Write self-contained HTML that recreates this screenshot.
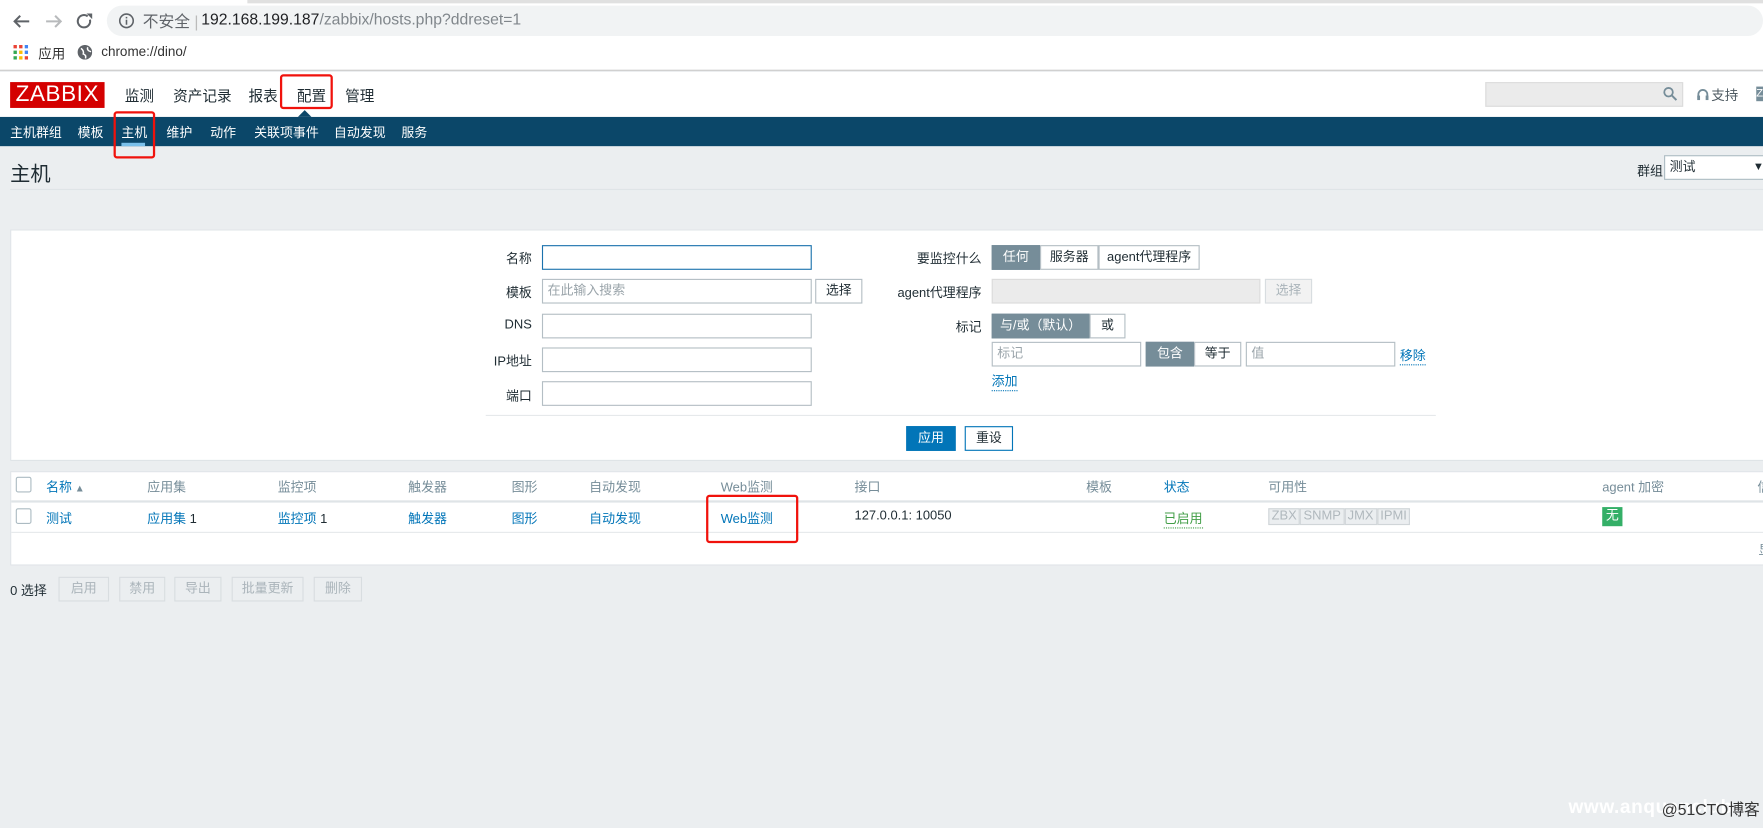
<!DOCTYPE html>
<html><head><meta charset="utf-8">
<style>
*{box-sizing:border-box;margin:0;padding:0}
html,body{width:1763px;height:827px;overflow:hidden;background:#ebeef0}
body{font-family:"Liberation Sans","Noto Sans CJK SC",sans-serif;font-size:11.5px;color:#1f2c33}
#w{position:absolute;left:0;top:0;width:1568px;height:736px;transform:scale(1.12436);transform-origin:0 0;background:#ebeef0}
.a{position:absolute;white-space:nowrap}
.lnk{color:#0275b8}
.inp{position:absolute;background:#fff;border:1px solid #b4bec4;height:22px}
.btn{position:absolute;height:22px;border:1px solid #b4bec4;background:#fff;text-align:center;line-height:20px;font-size:11.5px}
.sel{background:#768d99;color:#fff;border-color:#768d99}
.red{position:absolute;border:2px solid #f0120c;border-radius:3px}
.dis{position:absolute;height:22px;border:1px solid #d8dde0;background:#ebeef0;color:#aab4ba;text-align:center;line-height:20px}
.bd{display:inline-block;border:1px solid #d0d5d8;background:#ebeef0;color:#b0b8bd;padding:0 2px;height:15px;line-height:13px;font-size:11.5px}
</style></head><body>
<div id="w">
<div class="a" style="left:0;top:0;width:1568px;height:63px;background:#fff;border-bottom:1px solid #c8c8c8"></div>
<div class="a" style="left:220px;top:0;width:1348px;height:3px;background:#e0e0e0"></div>
<div class="a" style="left:95px;top:5px;width:1473px;height:27px;background:#f1f3f4;border-radius:14px"></div>
<svg class="a" style="left:10px;top:10px" width="80" height="18" viewBox="0 0 80 18"><path d="M16 9H3M8 4L3 9l5 5" stroke="#5f6368" stroke-width="1.8" fill="none"/><path d="M31 9h13M39 4l5 5-5 5" stroke="#b8babc" stroke-width="1.8" fill="none"/><path d="M68 4.5a5.5 5.5 0 1 0 2 3" stroke="#5f6368" stroke-width="1.8" fill="none"/><path d="M67 2h5v5z" fill="#5f6368"/></svg>
<svg class="a" style="left:105px;top:11px" width="15" height="15"><circle cx="7.5" cy="7.5" r="6" stroke="#5f6368" stroke-width="1.4" fill="none"/><rect x="6.8" y="6.5" width="1.4" height="4.5" fill="#5f6368"/><rect x="6.8" y="4" width="1.4" height="1.4" fill="#5f6368"/></svg>
<div class="a" style="left:127px;top:9px;font-size:14px;color:#5f6368">不安全 <span style="color:#bbb">|</span></div>
<div class="a" style="left:179px;top:9px;font-size:14px;color:#80868b"><span style="color:#202124">192.168.199.187</span>/zabbix/hosts.php?ddreset=1</div>
<svg class="a" style="left:12px;top:40px" width="13" height="13"><g><rect x="0" y="0" width="3" height="3" fill="#ea4335"/><rect x="5" y="0" width="3" height="3" fill="#ea4335"/><rect x="10" y="0" width="3" height="3" fill="#4285f4"/><rect x="0" y="5" width="3" height="3" fill="#34a853"/><rect x="5" y="5" width="3" height="3" fill="#fbbc05"/><rect x="10" y="5" width="3" height="3" fill="#4285f4"/><rect x="0" y="10" width="3" height="3" fill="#34a853"/><rect x="5" y="10" width="3" height="3" fill="#fbbc05"/><rect x="10" y="10" width="3" height="3" fill="#ea4335"/></g></svg>
<div class="a" style="left:34px;top:39px;font-size:12px;color:#333">应用</div>
<svg class="a" style="left:69px;top:40px" width="13" height="13"><circle cx="6.5" cy="6.5" r="6.5" fill="#5f6368"/><path d="M3 3q3 2 2 5q3 1 2 4M9 2q-1 3 3 4" stroke="#fff" stroke-width="1.3" fill="none"/></svg>
<div class="a" style="left:90px;top:39px;font-size:12px;color:#333">chrome://dino/</div>

<div class="a" style="left:0;top:64px;width:1568px;height:40px;background:#fff"></div>
<div class="a" style="left:9px;top:73px;width:84px;height:23px;background:#d40000;color:#fff;font-size:20px;line-height:23px;text-align:center;letter-spacing:0.5px">ZABBIX</div>
<div class="a" style="left:111px;top:75px;font-size:13px;color:#1f2c33">监测</div>
<div class="a" style="left:154px;top:75px;font-size:13px">资产记录</div>
<div class="a" style="left:221px;top:75px;font-size:13px">报表</div>
<div class="a" style="left:264px;top:75px;font-size:13px">配置</div>
<div class="a" style="left:307px;top:75px;font-size:13px">管理</div>
<div class="a" style="left:1321px;top:73px;width:176px;height:22px;background:#ebebeb;border:1px solid #dcdcdc"></div>
<svg class="a" style="left:1479px;top:77px" width="13" height="13"><circle cx="5" cy="5" r="3.8" stroke="#768d99" stroke-width="1.6" fill="none"/><path d="M8 8l4 4" stroke="#768d99" stroke-width="1.8"/></svg>
<svg class="a" style="left:1509px;top:78px" width="11" height="12"><path d="M1.5 9V6a4 4 0 0 1 8 0v3" stroke="#768d99" stroke-width="1.6" fill="none"/><rect x="0.5" y="7" width="2.5" height="4" fill="#768d99"/><rect x="8" y="7" width="2.5" height="4" fill="#768d99"/></svg>
<div class="a" style="left:1522px;top:76px;font-size:12px;color:#4f5b62">支持</div>
<div class="a" style="left:1562px;top:77px;width:10px;height:13px;background:#768d99;color:#fff;font-size:10px;line-height:13px">Z</div>

<div class="a" style="left:0;top:104px;width:1568px;height:26px;background:#0b4769"></div>
<div class="a" style="left:265px;top:98px;width:0;height:0;border-left:6px solid transparent;border-right:6px solid transparent;border-bottom:6px solid #0b4769"></div>
<div class="a" style="left:9px;top:110px;color:#fff">主机群组</div>
<div class="a" style="left:69px;top:110px;color:#fff">模板</div>
<div class="a" style="left:108px;top:110px;color:#fff">主机</div>
<div class="a" style="left:108px;top:127px;width:21px;height:3px;background:#7ac0ea"></div>
<div class="a" style="left:148px;top:110px;color:#fff">维护</div>
<div class="a" style="left:187px;top:110px;color:#fff">动作</div>
<div class="a" style="left:226px;top:110px;color:#fff">关联项事件</div>
<div class="a" style="left:297px;top:110px;color:#fff">自动发现</div>
<div class="a" style="left:357px;top:110px;color:#fff">服务</div>
<div class="red" style="left:249px;top:66px;width:47px;height:31px"></div>
<div class="red" style="left:101px;top:99px;width:37px;height:42px"></div>

<div class="a" style="left:9px;top:141px;font-size:18px;color:#1f2c33">主机</div>
<div class="a" style="left:9px;top:168px;width:1559px;height:1px;background:#dfe4e7"></div>
<div class="a" style="left:1456px;top:144px;color:#1f2c33">群组</div>
<div class="a" style="left:1480px;top:138px;width:92px;height:22px;background:#fff;border:1px solid #acbbc2;padding-left:4px;line-height:20px">测试<span style="position:absolute;left:78px;font-size:10px">▼</span></div>

<div class="a" style="left:9px;top:204px;width:1565px;height:206px;background:#fff;border:1px solid #dfe4e7"></div>
<div class="a" style="left:440px;top:222px;width:33px;text-align:right">名称</div>
<div class="inp" style="left:482px;top:218px;width:240px;border-color:#1b72ad"></div>
<div class="a" style="left:440px;top:252px;width:33px;text-align:right">模板</div>
<div class="inp" style="left:482px;top:248px;width:240px;color:#9aa4aa;padding-left:4px;line-height:20px">在此输入搜索</div>
<div class="btn" style="left:725px;top:248px;width:42px">选择</div>
<div class="a" style="left:440px;top:283px;width:33px;text-align:right">DNS</div>
<div class="inp" style="left:482px;top:279px;width:240px"></div>
<div class="a" style="left:420px;top:313px;width:53px;text-align:right">IP地址</div>
<div class="inp" style="left:482px;top:309px;width:240px"></div>
<div class="a" style="left:440px;top:344px;width:33px;text-align:right">端口</div>
<div class="inp" style="left:482px;top:339px;width:240px"></div>

<div class="a" style="left:790px;top:222px;width:83px;text-align:right">要监控什么</div>
<div class="btn sel" style="left:882px;top:218px;width:43px">任何</div>
<div class="btn" style="left:925px;top:218px;width:52px">服务器</div>
<div class="btn" style="left:977px;top:218px;width:90px">agent代理程序</div>
<div class="a" style="left:780px;top:252px;width:93px;text-align:right">agent代理程序</div>
<div class="a" style="left:882px;top:248px;width:239px;height:22px;background:#ebebeb;border:1px solid #dcdcdc"></div>
<div class="dis" style="left:1125px;top:248px;width:42px;background:#f2f2f2">选择</div>
<div class="a" style="left:790px;top:283px;width:83px;text-align:right">标记</div>
<div class="btn sel" style="left:882px;top:279px;width:87px">与/或（默认）</div>
<div class="btn" style="left:969px;top:279px;width:32px">或</div>
<div class="inp" style="left:882px;top:304px;width:133px;color:#9aa4aa;padding-left:4px;line-height:20px">标记</div>
<div class="btn sel" style="left:1019px;top:304px;width:43px">包含</div>
<div class="btn" style="left:1062px;top:304px;width:42px">等于</div>
<div class="inp" style="left:1108px;top:304px;width:133px;color:#9aa4aa;padding-left:4px;line-height:20px">值</div>
<div class="a lnk" style="left:1245px;top:308px;border-bottom:1px dotted #0275b8">移除</div>
<div class="a lnk" style="left:882px;top:331px;border-bottom:1px dotted #0275b8">添加</div>
<div class="a" style="left:432px;top:369px;width:845px;height:1px;background:#e6e9eb"></div>
<div class="btn" style="left:806px;top:379px;width:44px;background:#0275b8;border-color:#0275b8;color:#fff">应用</div>
<div class="btn" style="left:858px;top:379px;width:43px;border-color:#0275b8;color:#1f2c33">重设</div>

<div class="a" style="left:9px;top:419px;width:1565px;height:84px;background:#fff;border:1px solid #dfe4e7"></div>
<div class="a" style="left:10px;top:445px;width:1560px;height:2px;background:#dfe4e7"></div>
<div class="a" style="left:10px;top:473px;width:1560px;height:1px;background:#e6e9eb"></div>
<div class="a" style="left:14px;top:424px;width:14px;height:14px;border:1px solid #acbbc2;border-radius:2px;background:#fff"></div>
<div class="a" style="left:14px;top:452px;width:14px;height:14px;border:1px solid #acbbc2;border-radius:2px;background:#fff"></div>
<div class="a lnk" style="left:41px;top:425px">名称<span style="color:#768d99;font-size:9px"> ▲</span></div>
<div class="a" style="left:131px;top:425px;color:#768d99">应用集</div>
<div class="a" style="left:247px;top:425px;color:#768d99">监控项</div>
<div class="a" style="left:363px;top:425px;color:#768d99">触发器</div>
<div class="a" style="left:455px;top:425px;color:#768d99">图形</div>
<div class="a" style="left:524px;top:425px;color:#768d99">自动发现</div>
<div class="a" style="left:641px;top:425px;color:#768d99">Web监测</div>
<div class="a" style="left:760px;top:425px;color:#768d99">接口</div>
<div class="a" style="left:966px;top:425px;color:#768d99">模板</div>
<div class="a lnk" style="left:1035px;top:425px">状态</div>
<div class="a" style="left:1128px;top:425px;color:#768d99">可用性</div>
<div class="a" style="left:1425px;top:425px;color:#768d99">agent 加密</div>
<div class="a" style="left:1563px;top:425px;color:#768d99">信</div>

<div class="a lnk" style="left:41px;top:453px">测试</div>
<div class="a lnk" style="left:131px;top:453px">应用集 <span style="color:#1f2c33">1</span></div>
<div class="a lnk" style="left:247px;top:453px">监控项 <span style="color:#1f2c33">1</span></div>
<div class="a lnk" style="left:363px;top:453px">触发器</div>
<div class="a lnk" style="left:455px;top:453px">图形</div>
<div class="a lnk" style="left:524px;top:453px">自动发现</div>
<div class="a lnk" style="left:641px;top:453px">Web监测</div>
<div class="a" style="left:760px;top:453px">127.0.0.1: 10050</div>
<div class="a" style="left:1035px;top:453px;color:#429e47;border-bottom:1px dotted #429e47">已启用</div>
<div class="a" style="left:1128px;top:452px;font-size:0"><span class="bd">ZBX</span><span class="bd">SNMP</span><span class="bd">JMX</span><span class="bd">IPMI</span></div>
<div class="a" style="left:1425px;top:451px;width:18px;height:17px;background:#34af67;color:#fff;text-align:center;line-height:17px">无</div>
<div class="a" style="left:1564px;top:481px;color:#768d99">显</div>
<div class="red" style="left:628px;top:440px;width:82px;height:43px"></div>

<div class="a" style="left:9px;top:517px;color:#1f2c33">0 选择</div>
<div class="dis" style="left:52px;top:513px;width:45px">启用</div>
<div class="dis" style="left:106px;top:513px;width:41px">禁用</div>
<div class="dis" style="left:155px;top:513px;width:42px">导出</div>
<div class="dis" style="left:206px;top:513px;width:64px">批量更新</div>
<div class="dis" style="left:279px;top:513px;width:43px">删除</div>

<div class="a" style="left:1395px;top:708px;font-size:17px;color:#fff;font-weight:bold;letter-spacing:0.5px">www.anquanclub</div>
<div class="a" style="left:1478px;top:710px;font-size:14px;color:#333">@51CTO博客</div>
</div>
</body></html>
